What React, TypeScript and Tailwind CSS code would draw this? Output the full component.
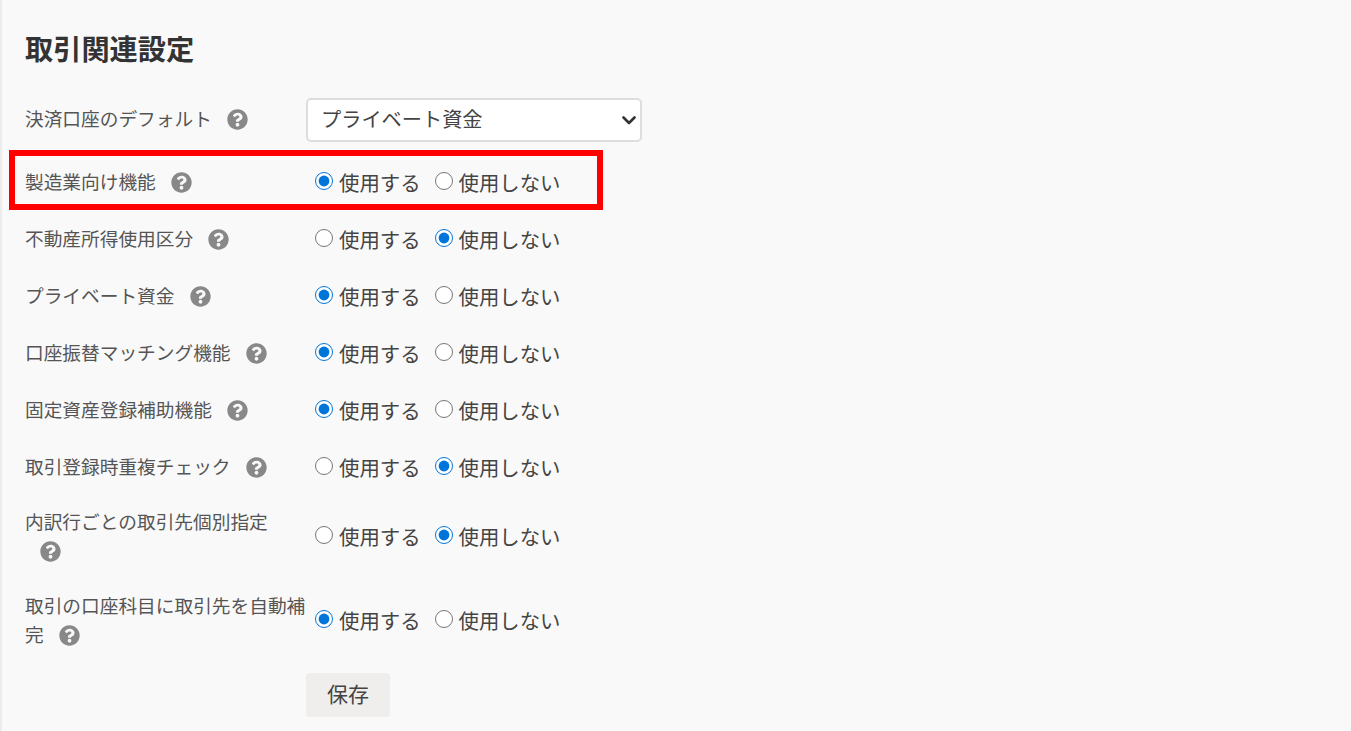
import { FaQuestionCircle } from "react-icons/fa";

type Setting = { label: string; on: boolean; height: string };

const settings: Setting[] = [
  { label: "製造業向け機能", on: true, height: "h-[57px] mt-[6px]" },
  { label: "不動産所得使用区分", on: false, height: "h-[57px]" },
  { label: "プライベート資金", on: true, height: "h-[57px]" },
  { label: "口座振替マッチング機能", on: true, height: "h-[57px]" },
  { label: "固定資産登録補助機能", on: true, height: "h-[57px]" },
  { label: "取引登録時重複チェック", on: false, height: "h-[57px]" },
  { label: "内訳行ごとの取引先個別指定", on: false, height: "h-[81px]" },
  { label: "取引の口座科目に取引先を自動補完", on: true, height: "h-[87px]" },
];

const Help = () => (
  <FaQuestionCircle className="inline-block ml-[15px] mr-[5px] w-[21px] h-[21px] text-[#888888] align-[-4px]" />
);

const Radio = ({ name, checked, text }: { name: string; checked: boolean; text: string }) => (
  <label className="flex items-center -mt-[2px]">
    <input
      type="radio"
      name={name}
      defaultChecked={checked}
      className="w-[18px] h-[18px] m-0 -mt-[2px] accent-[#0075d9]"
    />
    <span className="ml-[6px] text-[20.4px] leading-[28px] text-[#444444]">{text}</span>
  </label>
);

const App = () => {
  return (
    <div className="relative w-[1351px] h-[731px] overflow-hidden bg-[#f9f9f9] border-l-2 border-[#ececec] font-['Noto_Sans_CJK_JP',sans-serif]">
      <div className="pl-[24px]">
        <h1 className="h-[91px] pt-[30px] -ml-px text-[28.2px] leading-[36px] font-bold text-[#333333]">取引関連設定</h1>

        <div className="flex items-center h-[57px]">
          <div className="w-[281px] -ml-px -mt-[4px] text-[18.7px] leading-[29px] text-[#555555]">
            決済口座のデフォルト
            <Help />
          </div>
          <div className="relative">
            <select className="block appearance-none w-[336px] h-[44px] pl-[13px] bg-white border-2 border-[#dddddd] rounded-[5px] text-[20.2px] text-[#444444]">
              <option>プライベート資金</option>
            </select>
            <svg
              viewBox="0 0 14 9"
              className="absolute right-[6px] top-[18px] w-[14px] h-[9px] text-[#333333]"
              fill="none"
              stroke="currentColor"
              strokeWidth="2.6"
              strokeLinecap="round"
              strokeLinejoin="round"
            >
              <path d="M1.5 1.5 7 7l5.5-5.5" />
            </svg>
          </div>
        </div>

        {settings.map((s) => (
          <div key={s.label} className={`flex items-center ${s.height}`}>
            <div className="w-[282px] -ml-px -mt-[4px] text-[18.7px] leading-[29px] text-[#555555]">
              {s.label}
              <Help />
            </div>
            <div className="flex items-center gap-[14px] pl-[8px]">
              <Radio name={s.label} checked={s.on} text="使用する" />
              <Radio name={s.label} checked={!s.on} text="使用しない" />
            </div>
          </div>
        ))}

        <div className="pl-[280px] pt-[9px]">
          <button className="w-[84px] h-[44px] pb-[2px] rounded-[4px] bg-[#f0eeec] text-[21px] text-[#444444]">保存</button>
        </div>
      </div>

      {/* red highlight drawn over the row */}
      <div className="absolute left-[7px] top-[150px] w-[594px] h-[60px] border-[6px] border-[#ff0000]" />
    </div>
  );
};

export default App;
